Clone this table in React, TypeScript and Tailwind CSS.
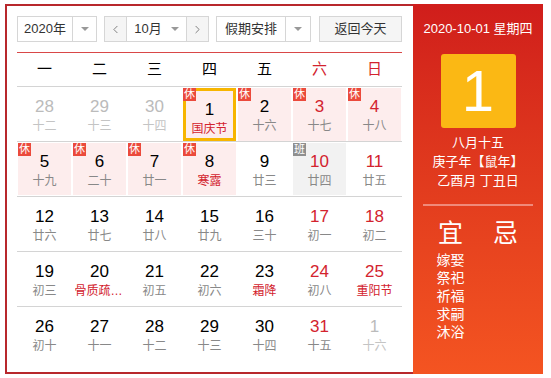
import { ChevronLeft, ChevronRight } from "lucide-react";

type Day = {
  d: number;
  l: string;
  other?: boolean;
  fest?: boolean;
  rest?: boolean;
  work?: boolean;
  today?: boolean;
};

const weeks: Day[][] = [
  [
    { d: 28, l: "十二", other: true },
    { d: 29, l: "十三", other: true },
    { d: 30, l: "十四", other: true },
    { d: 1, l: "国庆节", fest: true, rest: true, today: true },
    { d: 2, l: "十六", rest: true },
    { d: 3, l: "十七", rest: true },
    { d: 4, l: "十八", rest: true },
  ],
  [
    { d: 5, l: "十九", rest: true },
    { d: 6, l: "二十", rest: true },
    { d: 7, l: "廿一", rest: true },
    { d: 8, l: "寒露", rest: true, fest: true },
    { d: 9, l: "廿三" },
    { d: 10, l: "廿四", work: true },
    { d: 11, l: "廿五" },
  ],
  [
    { d: 12, l: "廿六" },
    { d: 13, l: "廿七" },
    { d: 14, l: "廿八" },
    { d: 15, l: "廿九" },
    { d: 16, l: "三十" },
    { d: 17, l: "初一" },
    { d: 18, l: "初二" },
  ],
  [
    { d: 19, l: "初三" },
    { d: 20, l: "骨质疏松日", fest: true },
    { d: 21, l: "初五" },
    { d: 22, l: "初六" },
    { d: 23, l: "霜降", fest: true },
    { d: 24, l: "初八" },
    { d: 25, l: "重阳节", fest: true },
  ],
  [
    { d: 26, l: "初十" },
    { d: 27, l: "十一" },
    { d: 28, l: "十二" },
    { d: 29, l: "十三" },
    { d: 30, l: "十四" },
    { d: 31, l: "十五" },
    { d: 1, l: "十六", other: true },
  ],
];

const weekdays = ["一", "二", "三", "四", "五", "六", "日"];
const yi = ["嫁娶", "祭祀", "祈福", "求嗣", "沐浴"];

function Caret() {
  return <span className="w-0 h-0 border-l-[4px] border-r-[4px] border-t-[4px] border-l-transparent border-r-transparent border-t-[#999]" />;
}

function Cell({ day, col }: { day: Day; col: number }) {
  const weekend = col >= 5;
  const numColor = day.other ? "text-[#bbb]" : weekend ? "text-[#d3232e]" : "text-black";
  const lunarColor = day.other ? "text-[#c4c4c4]" : day.fest ? "text-[#d3232e]" : "text-[#888]";
  const bg = day.rest ? "bg-[#fdeded]" : day.work ? "bg-[#f2f2f2]" : "bg-white";
  return (
    <div className="h-full p-px">
      <div
        className={`relative h-full flex flex-col items-center pt-[9px] ${bg} ${
          day.today ? "border-[3px] border-[#f7b500] pt-[6px]" : ""
        }`}
      >
        {day.rest && (
          <span className={`absolute ${day.today ? "-left-[3px] -top-[3px]" : "left-0 top-0"} w-[13px] h-[13px] bg-[#eb4a3c] text-white text-[11px] leading-[13px] text-center`}>
            休
          </span>
        )}
        {day.work && (
          <span className="absolute left-0 top-0 w-[13px] h-[13px] bg-[#8f8f8f] text-white text-[11px] leading-[13px] text-center">
            班
          </span>
        )}
        <span className={`text-[17px] leading-[20px] ${numColor}`}>{day.d}</span>
        <span className={`text-[12px] leading-[18px] max-w-[50px] truncate ${lunarColor}`}>{day.l}</span>
      </div>
    </div>
  );
}

export default function App() {
  return (
    <div className="bg-white w-[551px] h-[378px] pt-[4px] pl-[5px] font-['Liberation_Sans','Noto_Sans_CJK_SC',sans-serif]">
      <div className="flex w-[538px] h-[370px]">
        <div className="w-[408px] h-full border-2 border-r-0 border-[#b8282c] pt-[10px] pl-[10px] pr-[11px]">
          {/* toolbar */}
          <div className="flex items-center h-[26px] text-[13px] text-[#333]">
            <div className="flex h-full border border-[#d6d6d6] w-[80px]">
              <span className="flex-1 flex items-center justify-center border-r border-[#d6d6d6]">2020年</span>
              <span className="w-[23px] flex items-center justify-center"><Caret /></span>
            </div>
            <div className="flex h-full border border-[#d6d6d6] w-[105px] ml-[7px]">
              <span className="w-[22px] flex items-center justify-center bg-[#f5f5f5] border-r border-[#d6d6d6] text-[#666]">
                <ChevronLeft size={13} strokeWidth={1.5} />
              </span>
              <span className="flex-1 flex items-center justify-center gap-[9px]">
                10月 <Caret />
              </span>
              <span className="w-[22px] flex items-center justify-center bg-[#f5f5f5] border-l border-[#d6d6d6] text-[#666]">
                <ChevronRight size={13} strokeWidth={1.5} />
              </span>
            </div>
            <div className="flex h-full border border-[#d6d6d6] w-[95px] ml-[7px]">
              <span className="flex-1 flex items-center justify-center border-r border-[#d6d6d6]">假期安排</span>
              <span className="w-[24px] flex items-center justify-center"><Caret /></span>
            </div>
            <div className="h-full w-[83px] ml-auto border border-[#d6d6d6] bg-[#f5f5f5] flex items-center justify-center">
              返回今天
            </div>
          </div>
          <div className="mt-[10px] border-t border-[#d94848]" />
          {/* weekdays */}
          <div className="grid grid-cols-7 h-[34px] border-b border-[#d4d4d4] text-[15px]">
            {weekdays.map((w, i) => (
              <div key={w} className={`flex items-center justify-center ${i >= 5 ? "text-[#d3232e]" : "text-black"}`}>
                {w}
              </div>
            ))}
          </div>
          {weeks.map((week, r) => (
            <div key={r} className={`grid grid-cols-7 h-[55px] ${r < 4 ? "border-b border-[#d4d4d4]" : ""}`}>
              {week.map((day, c) => (
                <Cell key={c} day={day} col={c} />
              ))}
            </div>
          ))}
        </div>
        {/* right panel */}
        <div className="w-[130px] h-full bg-linear-to-b from-[#d01d1b] to-[#f45421] flex flex-col items-center text-white">
          <div className="mt-[16px] text-[13px] leading-[18px]">2020-10-01 星期四</div>
          <div className="mt-[16px] w-[75px] h-[74px] rounded-[3px] bg-[#fbb814] flex items-center justify-center text-[58px] leading-none">
            1
          </div>
          <div className="mt-[5px] text-[13px] leading-[19px] text-center">
            <div>八月十五</div>
            <div>庚子年【鼠年】</div>
            <div>乙酉月 丁丑日</div>
          </div>
          <div className="mt-[14px] w-[110px] border-t-2 border-[#f08a7a]" />
          <div className="w-full grid grid-cols-2 px-[10px] mt-[13px]">
            <div className="flex flex-col items-center">
              <span className="text-[25px] leading-[28px]">宜</span>
              <div className="mt-[4px] flex flex-col items-center text-[14px] leading-[18px]">
                {yi.map((t) => (
                  <span key={t}>{t}</span>
                ))}
              </div>
            </div>
            <div className="flex flex-col items-center">
              <span className="text-[25px] leading-[28px]">忌</span>
            </div>
          </div>
        </div>
      </div>
    </div>
  );
}
